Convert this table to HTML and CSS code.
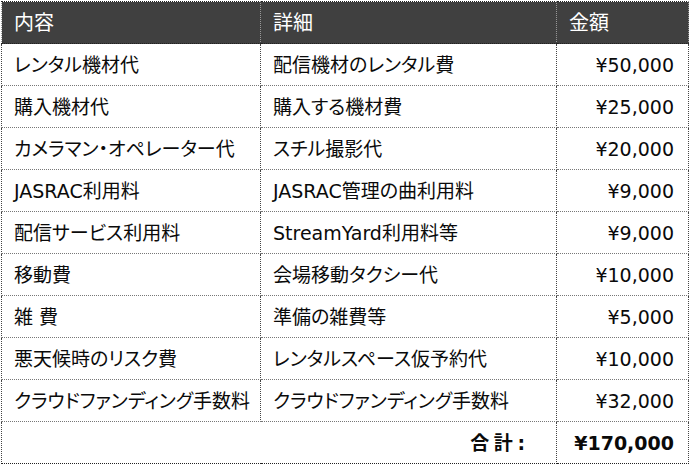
FILE: index.html
```html
<!DOCTYPE html>
<html lang="ja">
<head>
<meta charset="utf-8">
<link rel="stylesheet" href="styles.css">
</head>
<body>
<table class="budget">
  <colgroup>
    <col class="c1"><col class="c2"><col class="c3">
  </colgroup>
  <thead>
    <tr><th>内容</th><th>詳細</th><th>金額</th></tr>
  </thead>
  <tbody>
    <tr><td>レンタル機材代</td><td>配信機材のレンタル費</td><td class="amt">¥50,000</td></tr>
    <tr><td>購入機材代</td><td>購入する機材費</td><td class="amt">¥25,000</td></tr>
    <tr><td>カメラマン・オペレーター代</td><td>スチル撮影代</td><td class="amt">¥20,000</td></tr>
    <tr><td>JASRAC利用料</td><td>JASRAC管理の曲利用料</td><td class="amt">¥9,000</td></tr>
    <tr><td>配信サービス利用料</td><td>StreamYard利用料等</td><td class="amt">¥9,000</td></tr>
    <tr><td>移動費</td><td>会場移動タクシー代</td><td class="amt">¥10,000</td></tr>
    <tr><td>雑 費</td><td>準備の雑費等</td><td class="amt">¥5,000</td></tr>
    <tr><td>悪天候時のリスク費</td><td>レンタルスペース仮予約代</td><td class="amt">¥10,000</td></tr>
    <tr><td>クラウドファンディング手数料</td><td>クラウドファンディング手数料</td><td class="amt">¥32,000</td></tr>
    <tr class="total"><td colspan="2" class="label">合 計 :</td><td class="amt">¥170,000</td></tr>
  </tbody>
</table>
</body>
</html>
```
FILE: styles.css
```css
html, body {
  margin: 0;
  padding: 0;
  background: #ffffff;
}
body {
  padding: 1px 0 0 1px;
}
.budget {
  border-collapse: collapse;
  table-layout: fixed;
  width: 687px;
  font-family: "DejaVu Sans", "Noto Sans CJK JP", sans-serif;
  font-size: 19px;
  font-feature-settings: "palt";
  color: #0a0a0a;
  border: 1px dotted #222;
}
.c1 { width: 259px; }
.c2 { width: 296px; }
.c3 { width: 132px; }
.budget th,
.budget td {
  height: 42px;
  padding: 0 0 0 12px;
  line-height: 24px;
  text-align: left;
  white-space: nowrap;
  border: 1px dotted #444;
  box-sizing: border-box;
}
.budget th {
  background: #404040;
  color: #ffffff;
  font-weight: normal;
  font-size: 20px;
  border-top: 1px dotted #222;
  border-left: 1px dotted #999;
  border-right: 1px dotted #999;
  border-bottom: 1px dotted #222;
}
.budget td {
  border-bottom: 1px dotted #777;
}
.budget td.amt {
  text-align: right;
  padding: 0 14px 0 0;
}
.total td {
  font-weight: bold;
  border-bottom: 1px dotted #222;
}
.total td.label {
  text-align: right;
  padding: 0 31px 0 0;
  word-spacing: -2px;
}
```
